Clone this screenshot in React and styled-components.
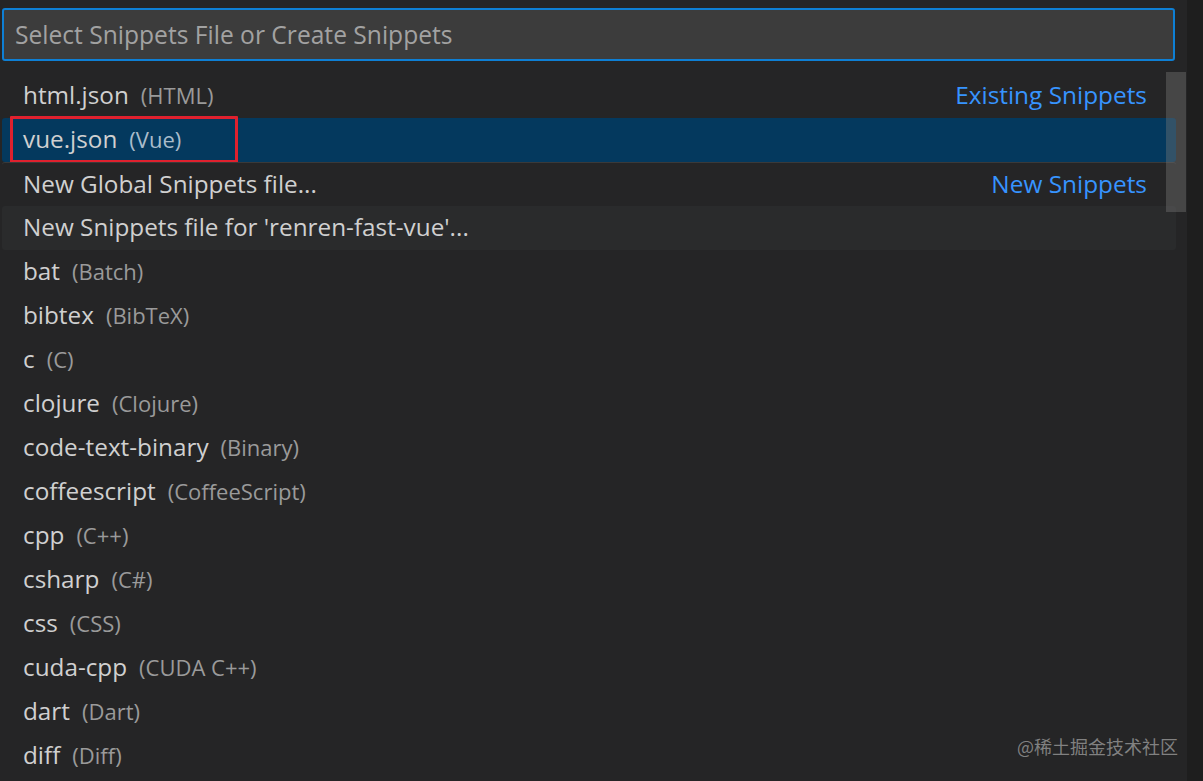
import React from "react";
import styled, { createGlobalStyle } from "styled-components";

const GlobalStyle = createGlobalStyle`
  html, body {
    margin: 0;
    padding: 0;
    background: #1e1e1e;
    overflow: hidden;
  }
  * { box-sizing: border-box; }
`;

const items = [
  { label: "html.json", desc: "(HTML)", side: "Existing Snippets" },
  { label: "vue.json", desc: "(Vue)", selected: true, marked: true },
  { label: "New Global Snippets file...", side: "New Snippets", separator: true },
  { label: "New Snippets file for 'renren-fast-vue'...", hover: true },
  { label: "bat", desc: "(Batch)" },
  { label: "bibtex", desc: "(BibTeX)" },
  { label: "c", desc: "(C)" },
  { label: "clojure", desc: "(Clojure)" },
  { label: "code-text-binary", desc: "(Binary)" },
  { label: "coffeescript", desc: "(CoffeeScript)" },
  { label: "cpp", desc: "(C++)" },
  { label: "csharp", desc: "(C#)" },
  { label: "css", desc: "(CSS)" },
  { label: "cuda-cpp", desc: "(CUDA C++)" },
  { label: "dart", desc: "(Dart)" },
  { label: "diff", desc: "(Diff)" },
];

function App() {
  return (
    <>
      <GlobalStyle />
      <Screen>
        <Picker>
          <InputBox>
            <Placeholder>Select Snippets File or Create Snippets</Placeholder>
          </InputBox>
          <ListArea>
            <List>
              {items.map((it) => (
                <Row
                  key={it.label}
                  $selected={it.selected}
                  $hover={it.hover}
                  $separator={it.separator}
                >
                  <Label>{it.label}</Label>
                  {it.desc && <Desc $selected={it.selected}>{it.desc}</Desc>}
                  {it.side && <Side>{it.side}</Side>}
                  {it.marked && <Mark />}
                </Row>
              ))}
            </List>
            <ScrollThumb />
          </ListArea>
          <Watermark>@稀土掘金技术社区</Watermark>
        </Picker>
      </Screen>
    </>
  );
}

const Screen = styled.div`
  width: 1203px;
  height: 781px;
  background: #1e1e1e;
  display: flex;
`;

const Picker = styled.div`
  position: relative;
  width: 1187px;
  height: 781px;
  background: #252526;
  padding: 8px 0 0 2px;
  display: flex;
  flex-direction: column;
  font-family: "Open Sans", "Noto Sans", sans-serif;
`;

const InputBox = styled.div`
  width: 1173px;
  height: 53px;
  background: #3c3c3c;
  border: 2px solid #0e7fd4;
  border-radius: 3px;
  display: flex;
  align-items: center;
  padding: 0 0 0 11px;
`;

const Placeholder = styled.span`
  font-size: 24.6px;
  color: #a2a2a2;
`;

const ListArea = styled.div`
  position: relative;
  margin-top: 13px;
`;

const List = styled.div`
  display: flex;
  flex-direction: column;
  width: 1174px;
`;

const Row = styled.div`
  position: relative;
  height: 44px;
  display: flex;
  align-items: center;
  padding: 0 29px 3px 21px;
  border-radius: 3px;
  background: ${(p) =>
    p.$selected ? "#04395e" : p.$hover ? "#2a2b2c" : "transparent"};
  border-top: ${(p) => (p.$separator ? "1px solid #3a3a3a" : "none")};
`;

const Label = styled.span`
  font-size: 24.3px;
  color: #d0d0d0;
  white-space: nowrap;
`;

const Desc = styled.span`
  margin-left: 12px;
  font-size: 22px;
  color: ${(p) => (p.$selected ? "#a9bccb" : "#9a9a9a")};
  white-space: nowrap;
`;

const Side = styled.span`
  margin-left: auto;
  font-size: 24.4px;
  color: #3794ff;
  white-space: nowrap;
`;

const Mark = styled.div`
  position: absolute;
  left: 8px;
  top: -2px;
  width: 228px;
  height: 47px;
  border: 3px solid #e0212e;
  border-radius: 1px;
  pointer-events: none;
`;

const ScrollThumb = styled.div`
  position: absolute;
  left: 1164px;
  top: -2px;
  width: 20px;
  height: 140px;
  background: rgba(121, 121, 121, 0.4);
`;

const Watermark = styled.div`
  position: absolute;
  right: 9px;
  bottom: 22px;
  font-family: "Noto Sans CJK SC", sans-serif;
  font-size: 18px;
  color: rgba(160, 160, 160, 0.75);
`;

export default App;
